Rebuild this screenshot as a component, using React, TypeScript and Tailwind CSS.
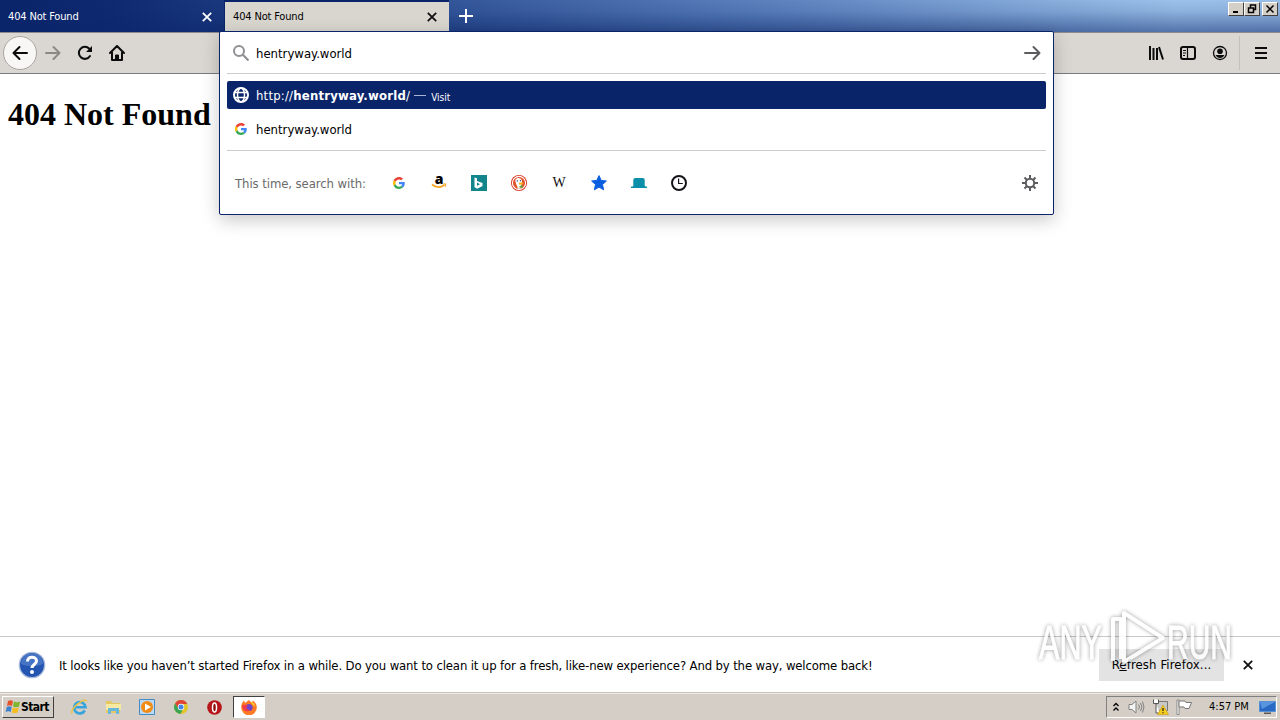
import type { ReactNode } from "react";

const engines = ["google", "amazon", "bing", "duck", "wiki", "star", "tabs", "history"];

const GoogleIcon = ({ size = 12 }: { size?: number }) => (
  <svg width={size} height={size} viewBox="0 0 48 48">
    <path fill="#ea4335" d="M24 9.500c3.500 0 6.700 1.200 9.200 3.600l6.900-6.900C35.900 2.400 30.500 0 24 0 14.600 0 6.500 5.400 2.600 13.200l8 6.200C12.400 13.700 17.700 9.500 24 9.500z" />
    <path fill="#4285f4" d="M47 24.600c0-1.600-.2-3.100-.4-4.600H24v9h12.900c-.6 3-2.200 5.500-4.700 7.200l7.700 6C44.400 38 47 32 47 24.600z" />
    <path fill="#fbbc05" d="M10.500 28.600a14.500 14.500 0 0 1 0-9.200l-8-6.200a24 24 0 0 0 0 21.600z" />
    <path fill="#34a853" d="M24 48c6.500 0 11.900-2.100 15.900-5.800l-7.700-6c-2.200 1.500-4.900 2.300-8.200 2.300-6.300 0-11.600-4.200-13.500-9.900l-8 6.200C6.500 42.600 14.600 48 24 48z" />
  </svg>
);

const EngineIcon = ({ name }: { name: string }) => {
  if (name === "google") return <GoogleIcon size={12} />;
  if (name === "amazon")
    return (
      <div className="flex h-4 w-4 flex-col items-center">
        <span className="font-['Open_Sans',sans-serif] text-[14px] leading-[8px] font-extrabold">a</span>
        <svg width="16" height="6" viewBox="0 0 16 6" fill="none" stroke="#f5a623">
          <path d="M1 1.500c4 3.500 9 3.500 12 .3" strokeWidth="1.700" />
          <path d="M12 1h2.700L14 3.800" strokeWidth="1.200" />
        </svg>
      </div>
    );
  if (name === "bing")
    return (
      <svg width="16" height="16" viewBox="0 0 16 16">
        <path fill="#12868a" d="M0 0h16v16H0z" />
        <path fill="#fff" d="M3.500 2.500l2.500.8V6l5.500 2v3l-5.300 2.800-2.700-1.600zM6 7.500v3.200l3-1.500z" fillRule="evenodd" />
      </svg>
    );
  if (name === "duck")
    return (
      <svg width="16" height="16" viewBox="0 0 16 16">
        <circle cx="8" cy="8" r="8" fill="#d8321f" />
        <circle cx="8" cy="8" r="6.600" fill="#e0522c" stroke="#fff" strokeWidth="1.100" />
        <path fill="#fff" d="M4.500 4.500C6 2 10.500 2.500 11 6l-.5 3-1 4.500-2.500.3C6.500 11 3.800 7.500 4.500 4.500z" />
        <path fill="#f9b31b" d="M8 7.500l4.800.2-1.500 1.800L8 9.500z" />
        <path fill="#58a844" d="M8.500 11l3-.8v2.800l-3-.5z" />
        <path fill="#2d4f8e" d="M9 5h1v1.200H9zM5.800 5.300h1.200v1.200H5.800z" />
      </svg>
    );
  if (name === "wiki")
    return <span className="mt-px font-['Liberation_Serif',serif] text-[14px] leading-4 tracking-normal text-[#111]">W</span>;
  if (name === "star")
    return (
      <svg width="16" height="16" viewBox="0 0 16 16">
        <path fill="#0a5fe0" stroke="#0a5fe0" strokeLinejoin="round" d="M8 .6l2.200 4.800 5.200.6-3.900 3.500 1.100 5.300L8 12.100l-4.600 2.700 1.100-5.300L.6 6l5.200-.6z" />
      </svg>
    );
  if (name === "tabs")
    return (
      <svg width="16" height="16" viewBox="0 0 16 16">
        <path fill="#0c8fa8" d="M0 11.500V13h16v-1.500h-1.300a1 1 0 0 1-1-1V5a2 2 0 0 0-2-2H4.300a2 2 0 0 0-2 2v5.500a1 1 0 0 1-1 1z" />
      </svg>
    );
  return (
    <svg width="16" height="16" viewBox="0 0 16 16" fill="none" stroke="#15141a" strokeWidth="2">
      <circle cx="8" cy="8" r="7" />
      <path strokeWidth="1.200" d="M7.600 3.500v5h4.200" />
    </svg>
  );
};

const CloseIcon = ({ color = "#111" }: { color?: string }) => (
  <svg width="10" height="10" viewBox="0 0 10 10" className="shrink-0">
    <path d="M.8.800l8.400 8.400M9.200.8L.8 9.200" stroke={color} strokeWidth="1.800" />
  </svg>
);

const WindowButton = ({ children }: { children: ReactNode }) => (
  <div className="flex h-[14px] w-4 items-center justify-center border border-t-white border-r-[#404040] border-b-[#404040] border-l-white bg-[#d4d0c8]">
    <svg width="12" height="10" viewBox="0 0 12 10" fill="none" stroke="#000" strokeWidth="1.500" className="shrink-0">
      {children}
    </svg>
  </div>
);

const TitleBar = () => (
  <div className="flex h-8 bg-[linear-gradient(to_bottom,rgba(10,36,106,0)_0%,rgba(10,36,106,0.100)_35%,rgba(10,36,106,0.500)_100%),linear-gradient(to_right,#0a246a_0%,#0f2a70_9%,#2a4d92_30%,#5f85c0_62%,#9cc2ea_92%,#98bde6_100%)]">
    <div className="flex h-8 w-[225px] items-center border-r border-[#0a246a] pt-px pr-3 pl-2 text-[11px] tracking-[-0.160px] text-white">
      <span className="mt-px flex-1">404 Not Found</span>
      <CloseIcon color="#fff" />
    </div>
    <div className="flex h-[31px] w-[224px] items-center border-t-2 border-[#0a246a] bg-[#d9d5cf] pr-3 pl-2 text-[11px] tracking-[-0.160px]">
      <span className="mt-[2px] flex-1">404 Not Found</span>
      <CloseIcon />
    </div>
    <svg width="14" height="14" viewBox="0 0 14 14" className="mt-[9px] ml-[10px]">
      <path d="M7 0v14M0 7h14" stroke="#fff" strokeWidth="2" />
    </svg>
    <div className="ml-auto flex pt-[2px] pr-[2px]">
      <WindowButton><path d="M3 8h5" strokeWidth="2" /></WindowButton>
      <WindowButton><path d="M4.500 3.500V1h5v4.500H8M2.500 4h5v4.500h-5z" /></WindowButton>
      <div className="w-[2px]" />
      <WindowButton><path d="M2.500 1.500l7 7M9.500 1.500l-7 7" /></WindowButton>
    </div>
  </div>
);

const ToolBar = () => (
  <div className="flex h-[42px] items-center border-t border-b border-t-[#8b8b90] border-b-[#7a7a80] bg-[#dad6d1]">
    <div className="ml-[3px] flex size-[34px] items-center justify-center rounded-full border border-[#a9a6a0] bg-[#f8f7f6]">
      <svg width="16" height="16" viewBox="0 0 16 16" fill="none" stroke="#0c0c0d" strokeWidth="2" strokeLinecap="round" strokeLinejoin="round">
        <path d="M15 8H1.500M7.500 2L1.500 8l6 6" />
      </svg>
    </div>
    <svg className="ml-2" width="16" height="16" viewBox="0 0 16 16" fill="none" stroke="#8b8986" strokeWidth="2" strokeLinecap="round" strokeLinejoin="round">
      <path d="M1 8h13.500M8.500 2l6 6-6 6" />
    </svg>
    <svg className="ml-4" width="16" height="16" viewBox="0 0 16 16" fill="none" stroke="#0c0c0d" strokeWidth="2" strokeLinecap="round">
      <path d="M13 11a6 6 0 1 1-.7-7.200" />
      <path d="M15 1v6H9z" fill="#0c0c0d" stroke="none" />
    </svg>
    <svg className="ml-4" width="16" height="16" viewBox="0 0 16 16" fill="none" stroke="#0c0c0d" strokeWidth="2" strokeLinecap="round" strokeLinejoin="round">
      <path d="M1 8l7-7 7 7M3 7.500V15h10V7.500" />
      <path d="M6.500 14v-4h3v4z" fill="#0c0c0d" strokeWidth="1" />
    </svg>
    <svg className="ml-auto" width="16" height="16" viewBox="0 0 16 16" fill="none" stroke="#0c0c0d" strokeWidth="2">
      <path d="M2 1v14M5.500 3v12M9 3v12M11 2l4 12.500" />
    </svg>
    <svg className="ml-4" width="16" height="16" viewBox="0 0 16 16" fill="none" stroke="#0c0c0d" strokeWidth="2">
      <rect x="1" y="2" width="14" height="12" rx="2" />
      <path d="M7.500 2v12" strokeWidth="1.200" />
      <path d="M3 5.500h3M3 8h3M3 10.500h2" strokeWidth="1" />
    </svg>
    <svg className="ml-4" width="16" height="16" viewBox="0 0 16 16">
      <circle cx="8" cy="8" r="6.500" fill="none" stroke="#0c0c0d" strokeWidth="1.300" />
      <circle cx="8" cy="6.200" r="2.800" fill="#0c0c0d" />
      <path d="M3.500 10h9c-1 2-2.500 3-4.500 3s-3.500-1-4.500-3z" fill="#0c0c0d" />
    </svg>
    <div className="ml-[11px] h-[34px] w-px bg-[#c4c0ba]" />
    <svg className="mr-3 ml-[14px]" width="14" height="16" viewBox="0 0 14 16">
      <path d="M1 3h12M1 8h12M1 13h12" stroke="#0c0c0d" strokeWidth="2" />
    </svg>
  </div>
);

const UrlBar = () => (
  <div className="absolute top-[31px] left-[219px] h-[184px] w-[835px] rounded-[2px] border border-[#0a246a] bg-white px-[7px] text-[13px] shadow-[0_5px_18px_rgba(0,0,0,0.220)]">
    <div className="flex h-[42px] items-center border-b border-[#ccc] pr-[5px] pl-[6px]">
      <svg width="16" height="16" viewBox="0 0 16 16" fill="none" stroke="#8f8f94" strokeWidth="2">
        <circle cx="6" cy="6" r="5" />
        <path d="M9.800 9.800l5.700 5.700" strokeWidth="2.200" />
      </svg>
      <span className="mt-[2px] ml-[7px] flex-1">hentryway.world</span>
      <svg width="17" height="16" viewBox="0 0 17 16" fill="none" stroke="#5c5c5e" strokeWidth="2" strokeLinecap="round" strokeLinejoin="round">
        <path d="M1 8h14.500M9.500 2l6 6-6 6" />
      </svg>
    </div>
    <div className="mt-[7px] flex h-7 items-center rounded-[2px] bg-[#0a246a] pl-[6px] text-white">
      <svg width="16" height="16" viewBox="0 0 16 16" fill="none" stroke="#fff" strokeWidth="1.500">
        <circle cx="8" cy="8" r="7" strokeWidth="2" />
        <ellipse cx="8" cy="8" rx="3.500" ry="7" />
        <path d="M1.500 5.500h13M1.500 10.500h13" />
      </svg>
      <span className="mt-[2px] ml-[7px] tracking-[0.200px]">http://<b>hentryway.world</b>/</span>
      <span className="ml-1 h-px w-3 bg-[#a9b4d2]" />
      <span className="mt-1 ml-[5px] text-[10px]">Visit</span>
    </div>
    <div className="mt-[6px] flex h-7 items-center pl-2">
      <GoogleIcon />
      <span className="mt-[2px] ml-[9px]">hentryway.world</span>
    </div>
    <div className="mt-[7px] flex h-16 items-center border-t border-[#ccc] pr-2 pl-2">
      <span className="mt-[2px] w-[156px] tracking-[-0.080px] text-[#6a6a6a]">This time, search with:</span>
      <div className="flex">
        {engines.map((name) => (
          <div key={name} className="mr-6 flex size-4 items-center justify-center">
            <EngineIcon name={name} />
          </div>
        ))}
      </div>
      <svg className="ml-auto" width="16" height="16" viewBox="0 0 16 16" fill="none" stroke="#5c5c5e" strokeWidth="2">
        <circle cx="8" cy="8" r="4.200" />
        <path d="M8 0v3.500M8 12.500V16M0 8h3.500M12.500 8H16M2.500 2.500L5 5M11 11l2.500 2.500M13.500 2.500L11 5M5 11l-2.500 2.500" />
      </svg>
    </div>
  </div>
);

const Notification = () => (
  <div className="flex h-[57px] items-center border-t border-b border-t-[#c8c8c8] border-b-[#c4c0ba] bg-white pl-[18px] text-[13px]">
    <svg width="28" height="28" viewBox="0 0 28 28">
      <circle cx="14" cy="14" r="13.300" fill="#a9bbdc" />
      <circle cx="14" cy="14" r="12" fill="#2455b0" />
      <path d="M3 13a11 11 0 0 1 22 0c-7 3-15 3-22 0z" fill="#4674c4" />
      <path d="M9.500 10.500c0-6 9-5.500 9-.5 0 3.500-4.500 3.500-4.500 7" fill="none" stroke="#fff" strokeWidth="3" />
      <circle cx="14" cy="21" r="2" fill="#fff" />
    </svg>
    <span className="mt-[2px] ml-[13px] flex-1 tracking-[-0.140px]">
      It looks like you haven’t started Firefox in a while. Do you want to clean it up for a fresh, like-new experience? And by the way, welcome back!
    </span>
    <button className="h-8 w-[125px] bg-[#e3e3e3] tracking-[0.120px]">R<u>e</u>fresh Firefox...</button>
    <div className="mr-[27px] ml-[19px]"><CloseIcon /></div>
  </div>
);

const Watermark = () => (
  <div className="absolute top-[604px] left-[1030px] opacity-85 drop-shadow-[0_0_2px_rgba(0,0,0,0.450)]">
    <svg width="212" height="72" viewBox="0 0 212 72" overflow="visible">
      <path d="M83 57V15h8v40M94 9l39 25-39 24z" fill="none" stroke="#fff" strokeWidth="4" strokeLinejoin="round" />
      <g fontFamily="Liberation Sans Narrow, Liberation Sans, sans-serif" fontSize="49" fill="#fff" stroke="#fff" strokeWidth="1">
        <text x="9" y="55" textLength="63" lengthAdjust="spacingAndGlyphs">ANY</text>
        <text x="137" y="55" textLength="65" lengthAdjust="spacingAndGlyphs">RUN</text>
      </g>
    </svg>
  </div>
);

const TaskBar = () => (
  <div className="flex h-[27px] items-center border-t border-[#f1eeea] bg-[#d5cec6]">
    <div className="ml-[2px] flex h-[22px] w-[52px] items-center border border-t-white border-r-[#404040] border-b-[#404040] border-l-white pl-[2px] text-[12px] font-bold">
      <svg width="16" height="16" viewBox="0 0 16 16" className="shrink-0">
        <path d="M3 2c2-1 3.500-1 5 0L7 7C5 6 4 6 2 7z" fill="#e5532a" />
        <path d="M9 2.500c2 1 4 1 6 0L14 7.500c-2 1-4 1-6 0z" fill="#7db72f" />
        <path d="M1.700 8c2-1 3.500-1 5 0l-1 5c-2-1-3-1-5 0z" fill="#3d83d0" />
        <path d="M7.700 8.500c2 1 4 1 6 0l-1 5c-2 1-4 1-6 0z" fill="#f6bd23" />
      </svg>
      <span className="tracking-[-0.600px]">Start</span>
    </div>
    <svg className="ml-[17px]" width="17" height="16" viewBox="0 0 17 16" fill="none">
      <path d="M13.800 11.500a5.700 5.700 0 1 1 .7-3.300H4" stroke="#35a4dc" strokeWidth="2.600" />
      <path d="M1 14.500C-1 10 12-1 16 2" stroke="#edc345" strokeWidth="1.500" />
    </svg>
    <svg className="ml-[17px]" width="17" height="16" viewBox="0 0 17 16">
      <path d="M1 2h5l1 2h8v10H1z" fill="#e6c75e" />
      <path d="M1 5h15v6H1z" fill="#f8e9a2" />
      <path d="M3 15V9h11v6h-3v-3H6v3z" fill="#67b8dc" />
    </svg>
    <svg className="ml-[17px]" width="16" height="16" viewBox="0 0 16 16">
      <path d="M.5.500h15v15H.5z" fill="#bcd9f1" stroke="#438bc5" />
      <circle cx="8" cy="8" r="6" fill="#f28b13" />
      <path d="M6 4.500v7L12 8z" fill="#fff" />
    </svg>
    <svg className="ml-[19px]" width="14" height="14" viewBox="0 0 14 14">
      <circle cx="7" cy="7" r="7" fill="#e3c52c" />
      <path d="M1 3.500A7 7 0 0 1 13.300 4H7L4 8z" fill="#df4436" />
      <path d="M1 3.500a7 7 0 0 0 5.500 10.500L9 9 4 8z" fill="#39a554" />
      <circle cx="7" cy="7" r="3.200" fill="#fff" />
      <circle cx="7" cy="7" r="2.500" fill="#4385e6" />
    </svg>
    <svg className="ml-[19px]" width="15" height="15" viewBox="0 0 15 15">
      <circle cx="7.500" cy="7.500" r="7.300" fill="#b61519" />
      <ellipse cx="7.500" cy="7.500" rx="2" ry="4.500" fill="#8d0d10" stroke="#fff" strokeWidth="1.500" />
    </svg>
    <div className="ml-[11px] flex h-[22px] w-8 items-center justify-center border border-t-[#404040] border-r-white border-b-white border-l-[#404040] bg-white">
      <svg width="16" height="16" viewBox="0 0 16 16">
        <path d="M8 1l2 2c1 .3 2-.5 2-1.500 2 2 4 4 3.800 7A7.800 7.800 0 0 1 .2 8.500C.2 6 1 3 3 1.500L4 4z" fill="#ff7a22" />
        <path d="M10 3c3 0 4 3 3.800 5L11 5z" fill="#ffcd35" />
        <circle cx="8" cy="8.500" r="3.600" fill="#7044c8" />
        <path d="M1 7c2-2 4-1 6 0-3 1-1 4 2 4-3 3-7 1-8-4z" fill="#f23b4c" />
      </svg>
    </div>
    <div className="mr-[3px] ml-auto flex h-[22px] w-[171px] items-center border border-t-[#808080] border-r-white border-b-white border-l-[#808080] pl-[5px] text-[11px]">
      <svg width="8" height="10" viewBox="0 0 8 10" fill="none" stroke="#000" strokeWidth="1.300">
        <path d="M1.500 4L4 1.500 6.500 4M1.500 8.500L4 6l2.500 2.500" />
      </svg>
      <svg className="ml-[8px]" width="17" height="16" viewBox="0 0 17 16" fill="none" stroke="#828282">
        <path d="M1 5.500h3L8 2v12l-4-3.500H1z" fill="#f3f3f3" />
        <path d="M10.500 5.500q2 2.500 0 5M12.500 4q3 4 0 8M14.500 2.500q3 5.500 0 11" />
      </svg>
      <svg className="ml-[7px]" width="17" height="16" viewBox="0 0 17 16">
        <path d="M4.500 2.500h11v9h-11z" fill="#c8c8c8" stroke="#777" />
        <path d="M1.500.500v4h5v-4M4 4.500V14h4" fill="#fff" stroke="#555" />
        <path d="M11 6l5.500 9.500h-11z" fill="#f7cd1c" stroke="#c69b0c" strokeWidth=".6" />
        <path d="M11 9v3M11 13.200v1" stroke="#222" strokeWidth="1.300" />
      </svg>
      <svg className="ml-[7px]" width="17" height="16" viewBox="0 0 17 16">
        <path d="M1 1v14.500h2V1z" fill="#fff" stroke="#777" strokeWidth=".8" />
        <path d="M3 2h6l1 1.500h5.500L13 9.500H9L8 8H3z" fill="#fff" stroke="#777" />
      </svg>
      <span className="mt-px ml-4 flex-1">4:57 PM</span>
      <svg width="17" height="15" viewBox="0 0 17 15">
        <path d="M.5 1.500h16v10H.5z" fill="#2869c3" stroke="#5790d4" />
        <path d="M1 2h15L3 9z" fill="#5895df" />
        <path d="M5 12.500h7v1.500H5z" fill="#555" />
      </svg>
    </div>
  </div>
);

const App = () => {
  return (
    <div className="relative flex h-[720px] w-[1280px] flex-col overflow-hidden bg-white font-['DejaVu_Sans_Condensed','DejaVu_Sans',sans-serif] whitespace-nowrap text-black">
      <TitleBar />
      <ToolBar />
      <main className="flex-1 px-2 pt-[22px]">
        <h1 className="font-['Liberation_Serif',serif] text-[32px] leading-[37px] font-bold">404 Not Found</h1>
      </main>
      <Notification />
      <TaskBar />
      <UrlBar />
      <Watermark />
    </div>
  );
};

export default App;
